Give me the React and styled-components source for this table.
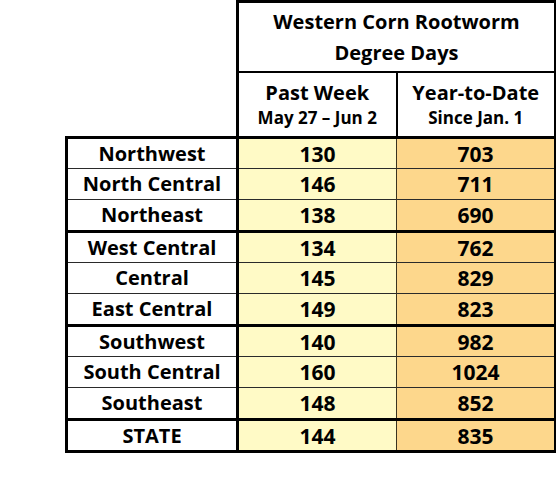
import React from 'react'
import styled, { createGlobalStyle } from 'styled-components'

const GlobalStyle = createGlobalStyle`
  body {
    margin: 0;
    background: #ffffff;
  }
`

const groups = [
  [
    ['Northwest', 130, 703],
    ['North Central', 146, 711],
    ['Northeast', 138, 690],
  ],
  [
    ['West Central', 134, 762],
    ['Central', 145, 829],
    ['East Central', 149, 823],
  ],
  [
    ['Southwest', 140, 982],
    ['South Central', 160, 1024],
    ['Southeast', 148, 852],
  ],
  [['STATE', 144, 835]],
]

function App() {
  return (
    <Page>
      <GlobalStyle />
      <Table>
        <colgroup>
          <Col $w={171} />
          <Col $w={159} />
          <Col $w={159} />
        </colgroup>
        <thead>
          <tr>
            <Blank />
            <TitleCell colSpan={2}>
              Western Corn Rootworm
              <br />
              Degree Days
            </TitleCell>
          </tr>
          <tr>
            <Blank />
            <SubHead>
              <HeadMain>Past Week</HeadMain>
              <HeadSmall>May 27 – Jun 2</HeadSmall>
            </SubHead>
            <SubHead>
              <HeadMain>Year-to-Date</HeadMain>
              <HeadSmall>Since Jan. 1</HeadSmall>
            </SubHead>
          </tr>
        </thead>
        <tbody>
          {groups.map((group) =>
            group.map(([name, week, ytd], i) => (
              <tr key={name}>
                <Region $thick={i === 0}>{name}</Region>
                <Value $thick={i === 0} $tone="week">
                  {week}
                </Value>
                <Value $thick={i === 0} $tone="ytd">
                  {ytd}
                </Value>
              </tr>
            ))
          )}
        </tbody>
      </Table>
    </Page>
  )
}

const Page = styled.div`
  width: 556px;
  height: 500px;
  padding-left: 65px;
  box-sizing: border-box;
  background: #ffffff;
`

const Table = styled.table`
  border-collapse: collapse;
  table-layout: fixed;
  width: 489px;
  font-family: 'Open Sans', 'Liberation Sans', sans-serif;
  font-weight: 700;
  color: #000000;
`

const Col = styled.col`
  width: ${(p) => p.$w}px;
`

const Blank = styled.td`
  border: none;
  padding: 0;
`

const TitleCell = styled.th`
  height: 68px;
  padding: 0;
  border: 3px solid #000;
  border-bottom-width: 2px;
  font-size: 20px;
  line-height: 31px;
  font-weight: 700;
  text-align: center;
`

const SubHead = styled.th`
  height: 63px;
  padding: 0;
  border-left: 2px solid #000;
  border-right: 3px solid #000;
  border-bottom: 3px solid #000;
  text-align: center;
  vertical-align: middle;

  &:nth-child(2) {
    border-left: 3px solid #000;
    border-right: 2px solid #000;
  }
`

const HeadMain = styled.div`
  font-size: 20px;
  line-height: 26px;
`

const HeadSmall = styled.div`
  font-size: 17px;
  line-height: 24px;
`

const Region = styled.td`
  height: ${(p) => (p.$thick ? 29 : 30)}px;
  padding: 0;
  border-left: 3px solid #000;
  border-right: 3px solid #000;
  border-top: ${(p) => (p.$thick ? '3px solid #000' : '1px solid #2a2a2a')};
  border-bottom: 3px solid #000;
  background: #ffffff;
  font-size: 20px;
  line-height: 28px;
  text-align: center;

  tr:not(:last-child) > & {
    border-bottom: none;
  }
`

const Value = styled.td`
  height: ${(p) => (p.$thick ? 29 : 30)}px;
  padding: 0;
  border-top: ${(p) => (p.$thick ? '3px solid #000' : '1px solid #2a2a2a')};
  border-right: ${(p) => (p.$tone === 'ytd' ? '3px solid #000' : '1px solid #3a3320')};
  border-bottom: 3px solid #000;
  background: ${(p) => (p.$tone === 'ytd' ? '#fdd78c' : '#fffac6')};
  font-size: 21px;
  line-height: 28px;
  text-align: center;

  tr:not(:last-child) > & {
    border-bottom: none;
  }
`

export default App
